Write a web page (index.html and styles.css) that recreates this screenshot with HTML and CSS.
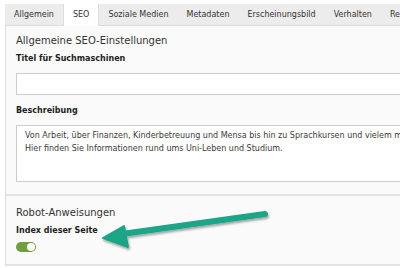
FILE: index.html
```html
<!DOCTYPE html>
<html lang="de">
<head>
  <meta charset="UTF-8">
  <title>SEO</title>
  <link rel="stylesheet" href="styles.css">
</head>
<body>
  <div id="editor">
    <ul class="tabs">
      <li class="tab">Allgemein</li>
      <li class="tab active">SEO</li>
      <li class="tab">Soziale Medien</li>
      <li class="tab">Metadaten</li>
      <li class="tab">Erscheinungsbild</li>
      <li class="tab">Verhalten</li>
      <li class="tab">Ressourcen</li>
    </ul>
    <div class="panel">
      <div class="section">
        <h2>Allgemeine SEO-Einstellungen</h2>
        <label class="label">Titel für Suchmaschinen</label>
        <div class="input"></div>
        <label class="label">Beschreibung</label>
        <div class="textarea">Von Arbeit, über Finanzen, Kinderbetreuung und Mensa bis hin zu Sprachkursen und vielem mehr.<br>Hier finden Sie Informationen rund ums Uni-Leben und Studium.</div>
      </div>
      <div class="section">
        <h2>Robot-Anweisungen</h2>
        <label class="label">Index dieser Seite</label>
        <div class="toggle"><span class="knob"></span></div>
      </div>
    </div>
    <svg class="arrow" width="400" height="268" viewBox="0 0 400 268">
      <defs>
        <filter id="shadow" x="-20%" y="-50%" width="140%" height="200%">
          <feDropShadow dx="1" dy="2" stdDeviation="1.2" flood-color="#000" flood-opacity="0.35"/>
        </filter>
      </defs>
      <g filter="url(#shadow)" fill="#1aa587" stroke="#1aa587">
        <line x1="265" y1="214" x2="122" y2="234" stroke-width="6" stroke-linecap="round"/>
        <path d="M103 238 L124 226 L128 247 Z" stroke-width="2" stroke-linejoin="round"/>
      </g>
    </svg>
  </div>
</body>
</html>
```

FILE: styles.css
```css
body {
  margin: 0;
  font-family: "DejaVu Sans", Verdana, sans-serif;
  font-size: 8px;
  color: #333;
  background: #fff;
  overflow: hidden;
}
#editor {
  position: relative;
  padding: 4px 0 0 5px;
  width: 440px;
}
.tabs {
  display: flex;
  margin: 0;
  padding: 0;
  list-style: none;
  background: #ececec;
  border-bottom: 1px solid #dcdcdc;
  height: 21px;
}
.tab {
  padding: 0 9px;
  line-height: 21px;
  white-space: nowrap;
  color: #333;
}
.tab.active {
  background: #fff;
  border-left: 1px solid #ddd;
  border-right: 1px solid #ddd;
  height: 22px;
}
.panel {
  background: #fafafa;
  border-left: 1px solid #ddd;
}
.section {
  padding: 8px 0 12px 10px;
  border-bottom: 2px solid #e3e3e3;
}
.section + .section {
  padding-top: 10px;
  padding-bottom: 12px;
}
h2 {
  margin: 0;
  font-size: 10px;
  font-weight: normal;
  line-height: 14px;
  color: #333;
}
.label {
  display: block;
  font-weight: bold;
  margin-top: 5px;
  line-height: 12px;
  color: #1e1e1e;
}
.input {
  margin-top: 8px;
  margin-bottom: 10px;
  height: 20px;
  background: #fff;
  border: 1px solid #ccc;
}
.textarea {
  margin-top: 8px;
  height: 47px;
  padding: 3px 8px 5px 8px;
  line-height: 13px;
  background: #fff;
  border: 1px solid #ccc;
  white-space: nowrap;
  color: #3a3a3a;
}
.toggle {
  margin-top: 5px;
  width: 20px;
  height: 10px;
  border-radius: 5px;
  background: #6e9f3f;
  position: relative;
}
.knob {
  position: absolute;
  right: 1px;
  top: 1px;
  width: 8px;
  height: 8px;
  border-radius: 50%;
  background: #fff;
}
.arrow {
  position: absolute;
  left: 0;
  top: 0;
}
```
